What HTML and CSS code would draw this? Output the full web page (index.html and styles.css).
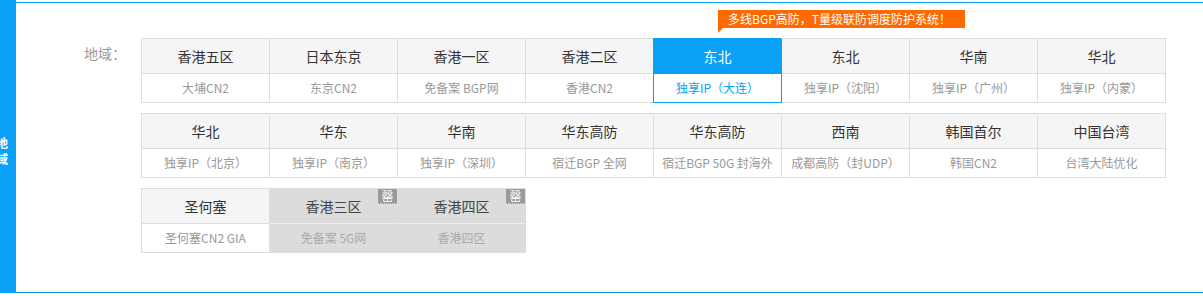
FILE: index.html
```html
<!DOCTYPE html>
<html>
<head>
    <title>地域选择</title>
    <link rel="stylesheet" href="styles.css">
</head>
<body>
    <div class="page">
        <div class="side"><span>地</span><span>域</span></div>
        <div class="panel">
            <div class="field">
                <div class="label">地域：</div>
                <div class="groups">
                    <div class="regions">
                        <div class="cell"><div class="name">香港五区</div><div class="desc">大埔CN2</div></div>
                        <div class="cell"><div class="name">日本东京</div><div class="desc">东京CN2</div></div>
                        <div class="cell"><div class="name">香港一区</div><div class="desc">免备案 BGP网</div></div>
                        <div class="cell"><div class="name">香港二区</div><div class="desc">香港CN2</div></div>
                        <div class="cell active">
                            <div class="tip">多线BGP高防，T量级联防调度防护系统！</div>
                            <div class="name">东北</div><div class="desc">独享IP（大连）</div>
                        </div>
                        <div class="cell"><div class="name">东北</div><div class="desc">独享IP（沈阳）</div></div>
                        <div class="cell"><div class="name">华南</div><div class="desc">独享IP（广州）</div></div>
                        <div class="cell"><div class="name">华北</div><div class="desc">独享IP（内蒙）</div></div>
                    </div>
                    <div class="regions">
                        <div class="cell"><div class="name">华北</div><div class="desc">独享IP（北京）</div></div>
                        <div class="cell"><div class="name">华东</div><div class="desc">独享IP（南京）</div></div>
                        <div class="cell"><div class="name">华南</div><div class="desc">独享IP（深圳）</div></div>
                        <div class="cell"><div class="name">华东高防</div><div class="desc">宿迁BGP 全网</div></div>
                        <div class="cell"><div class="name">华东高防</div><div class="desc">宿迁BGP 50G 封海外</div></div>
                        <div class="cell"><div class="name">西南</div><div class="desc">成都高防（封UDP）</div></div>
                        <div class="cell"><div class="name">韩国首尔</div><div class="desc">韩国CN2</div></div>
                        <div class="cell"><div class="name">中国台湾</div><div class="desc">台湾大陆优化</div></div>
                    </div>
                    <div class="regions">
                        <div class="cell"><div class="name">圣何塞</div><div class="desc">圣何塞CN2 GIA</div></div>
                        <div class="cell off"><div class="name">香港三区<i class="sold">罄</i></div><div class="desc">免备案 5G网</div></div>
                        <div class="cell off"><div class="name">香港四区<i class="sold">罄</i></div><div class="desc">香港四区</div></div>
                    </div>
                </div>
            </div>
        </div>
    </div>
</body>
</html>
```

FILE: styles.css
```css
body {
    margin: 0;
    font-family: "Noto Sans CJK SC", "Liberation Sans", sans-serif;
    background: #fff;
}
.page {
    display: flex;
    align-items: flex-start;
}
.side {
    width: 16px;
    height: 293px;
    background: #0aa0f5;
    overflow: hidden;
    color: #fff;
    font-size: 12px;
    font-weight: bold;
    padding-top: 135px;
    box-sizing: border-box;
}
.side span {
    display: block;
    height: 16px;
    line-height: 16px;
    margin-left: -4px;
}
.panel {
    flex: 1;
    margin-top: 2px;
    height: 291px;
    box-sizing: border-box;
    border-top: 1px solid #0aa0f5;
    border-bottom: 1px solid #1a8fd8;
    padding: 35px 0 0 68px;
}
.field {
    display: flex;
}
.label {
    width: 57px;
    font-size: 14px;
    line-height: 30px;
    color: #999;
}
.groups {
    display: flex;
    flex-direction: column;
    gap: 10px;
}
.regions {
    display: grid;
    grid-template-columns: repeat(8, 128px);
    border-left: 1px solid #ddd;
    border-top: 1px solid #ddd;
    align-self: flex-start;
}
.regions:last-child {
    grid-template-columns: repeat(3, 128px);
}
.cell {
    position: relative;
    border-right: 1px solid #ddd;
    text-align: center;
}
.name {
    position: relative;
    height: 34px;
    line-height: 34px;
    background: #f5f5f5;
    border-bottom: 1px solid #ddd;
    font-size: 14px;
    color: #333;
}
.desc {
    height: 28px;
    line-height: 28px;
    border-bottom: 1px solid #ddd;
    font-size: 12px;
    color: #999;
}
.cell.active {
    border-right-color: #0aa0f5;
    box-shadow: -1px 0 0 #0aa0f5;
}
.cell.active .name {
    background: #0aa0f5;
    color: #fff;
    border-bottom-color: #0aa0f5;
    box-shadow: 0 -1px 0 #0aa0f5, -1px -1px 0 #0aa0f5;
}
.cell.active .desc {
    color: #0aa0f5;
    border-bottom-color: #0aa0f5;
}
.cell.off {
    background: #dcdcdc;
    border-right-color: #dcdcdc;
}
.cell.off .name {
    background: #dcdcdc;
    color: #444;
    border-bottom-color: #eeeeee;
}
.cell.off .desc {
    color: #aaa;
    border-bottom-color: #dcdcdc;
}
.sold {
    position: absolute;
    top: 0;
    right: 0;
    width: 19px;
    height: 14px;
    line-height: 14px;
    background: #9a9a9a;
    border-bottom: 1px dotted #ccc;
    color: #fff;
    font-size: 12px;
    font-style: normal;
}
.tip {
    position: absolute;
    left: 64px;
    top: -29px;
    height: 18px;
    line-height: 18px;
    padding: 0 14px 0 10px;
    background: #ff6a00;
    color: #fff;
    font-size: 12px;
    white-space: nowrap;
    z-index: 2;
}
.tip::after {
    content: "";
    position: absolute;
    left: 0;
    bottom: -5px;
    border-top: 5px solid #ff6a00;
    border-right: 5px solid transparent;
}
```
